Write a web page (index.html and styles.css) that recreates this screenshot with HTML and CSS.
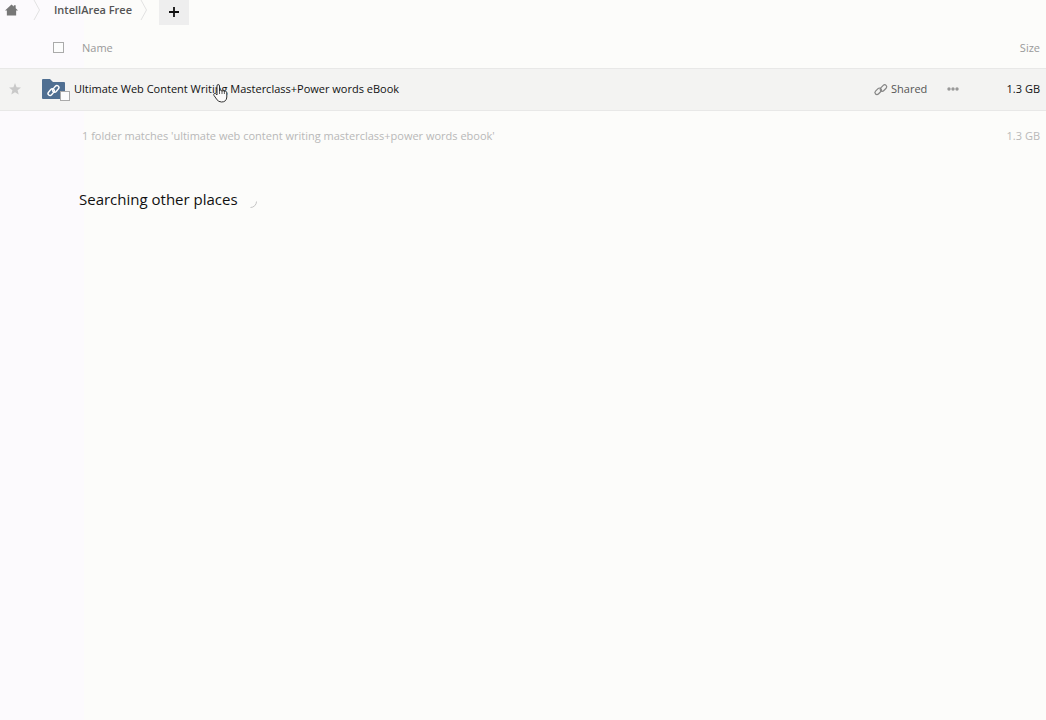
FILE: index.html
```
<!DOCTYPE html>
<html lang="en">
<head>
    <meta charset="UTF-8">
    <meta name="viewport" content="width=device-width, initial-scale=1.0">
    <title>IntellArea Free</title>
    <link rel="stylesheet" href="styles.css">
</head>
<body>
    <nav class="breadcrumb">
        <a class="home" href="#" aria-label="Home">
            <svg width="13" height="12" viewBox="0 0 14 12"><path d="M7 0L9.500 2.300V1H11.500V4.200L14 6.600H12V12H2V6.600H0Z" fill="#777"/></svg>
        </a>
        <svg class="crumb-sep" width="8" height="24" viewBox="0 0 8 24"><path d="M1 0L6.500 10L1 20" fill="none" stroke="#e2e2e2"/></svg>
        <a class="crumb" href="#">IntellArea Free</a>
        <svg class="crumb-sep" width="8" height="24" viewBox="0 0 8 24"><path d="M1 0L6.500 10L1 20" fill="none" stroke="#e2e2e2"/></svg>
        <button class="add-btn" aria-label="New">
            <svg width="10" height="10" viewBox="0 0 10 10"><path d="M5 0V10M0 5H10" stroke="#111" stroke-width="1.800"/></svg>
        </button>
    </nav>

    <table class="files">
        <thead>
            <tr>
                <th class="col-star"></th>
                <th class="col-name">
                    <div class="head-name">
                        <input type="checkbox" id="select-all" class="check" aria-label="Select all">
                        <span>Name</span>
                    </div>
                </th>
                <th class="col-share"></th>
                <th class="col-menu"></th>
                <th class="col-size">Size</th>
            </tr>
        </thead>
        <tbody>
            <tr>
                <td class="col-star">
                    <button class="icon-btn" aria-label="Favorite">
                        <svg width="12" height="12" viewBox="0 0 12 12"><path d="M6 0L7.600 4.200L12 4.500L8.600 7.200L9.700 11.600L6 9.200L2.300 11.600L3.400 7.200L0 4.500L4.400 4.200Z" fill="#c9c9c9"/></svg>
                    </button>
                </td>
                <td class="col-name">
                    <div class="file">
                        <div class="thumb">
                            <svg width="24" height="20" viewBox="0 0 24 20">
                                <path d="M0 1Q0 0 1 0H8L11 3H22Q23 3 23 4V19Q23 20 22 20H1Q0 20 0 19Z" fill="#4f6f92"/>
                                <g fill="none" stroke="#fff" stroke-width="1.400" transform="rotate(-50 11.500 11.500)">
                                    <rect x="5" y="8.800" width="7.500" height="4" rx="2"/>
                                    <rect x="10.500" y="10.200" width="7.500" height="4" rx="2"/>
                                </g>
                            </svg>
                            <input type="checkbox" class="check row-check" aria-label="Select folder">
                        </div>
                        <a class="file-name" href="#">Ultimate Web Content Writing Masterclass+Power words eBook</a>
                        <svg class="pointer" width="15" height="19" viewBox="0 0 15 19"><path d="M4 11V2Q4 .5 5.200 .5T6.500 2V7Q6.500 6 7.700 6T9 7.500Q9 6.500 10.200 6.500T11.400 8Q11.500 7 12.600 7.200T13.800 8.800V13Q13.500 18 8.500 18Q5 18 3.500 15L1 11.500Q.3 10 1.300 9.500T3 10Z" fill="#fafafa" stroke="#333"/><path d="M6.500 7V10M9 7.500V10M11.400 8V10" stroke="#333" stroke-width=".8"/></svg>
                    </div>
                </td>
                <td class="col-share">
                    <button class="share-btn">
                        <svg width="12" height="13" viewBox="0 0 12 13">
                            <g fill="none" stroke="#858585" stroke-width="1.200" transform="rotate(-45 6 6.500)">
                                <rect x="-1" y="3.800" width="7.500" height="4" rx="2"/>
                                <rect x="5" y="5.200" width="7.500" height="4" rx="2"/>
                            </g>
                        </svg>
                        Shared
                    </button>
                </td>
                <td class="col-menu">
                    <button class="icon-btn" aria-label="More">
                        <svg width="12" height="4" viewBox="0 0 12 4" fill="#999"><circle cx="2" cy="2" r="1.700"/><circle cx="6" cy="2" r="1.700"/><circle cx="10" cy="2" r="1.700"/></svg>
                    </button>
                </td>
                <td class="col-size">1.3 GB</td>
            </tr>
        </tbody>
        <tfoot>
            <tr>
                <td class="col-star"></td>
                <td class="summary" colspan="3">1 folder matches 'ultimate web content writing masterclass+power words ebook'</td>
                <td class="col-size">1.3 GB</td>
            </tr>
        </tfoot>
    </table>

    <div class="searching">
        <h2>Searching other places</h2>
        <svg class="spinner" width="14" height="14" viewBox="0 0 14 14"><path d="M12.500 6.500A6 6 0 0 1 6.500 12.500" fill="none" stroke="#c4c4c4"/></svg>
    </div>
</body>
</html>
```
FILE: styles.css
```
* {
    box-sizing: border-box;
}
body {
    margin: 0;
    min-height: 100vh;
    font-family: "Open Sans", sans-serif;
    font-size: 11px;
    line-height: 16px;
    color: #111;
    background: linear-gradient(to right, #fcfafd 84px, #fcfcfa 84px);
}
a {
    color: inherit;
    text-decoration: none;
}
svg {
    display: block;
    flex: none;
    overflow: visible;
}
button {
    display: flex;
    align-items: center;
    padding: 0;
    border: none;
    background: none;
    font: inherit;
    cursor: pointer;
}

/* breadcrumb */
.breadcrumb {
    display: flex;
    align-items: flex-start;
    height: 28px;
    padding-left: 5px;
}
.home {
    padding-top: 4px;
    margin-right: 15px;
}
.crumb {
    padding: 2px 8px 0 13px;
    font-weight: 600;
    color: #555;
}
.add-btn {
    justify-content: center;
    width: 30px;
    height: 25px;
    margin-left: 11px;
    padding-bottom: 2px;
    background: #eee;
}

/* file list */
.files {
    width: 100%;
    border-collapse: collapse;
    table-layout: fixed;
}
th, td {
    padding: 0;
    font-weight: normal;
    text-align: left;
}
thead tr {
    height: 40px;
    color: #999;
}
tbody tr {
    height: 42px;
    background: #f3f3f2;
    border-top: 1px solid #e8e8e7;
    border-bottom: 1px solid #e8e8e7;
}
tfoot tr {
    height: 52px;
    color: #b8b8b8;
}
.col-star {
    width: 42px;
}
.col-star .icon-btn {
    padding-left: 9px;
}
.col-share {
    width: 72px;
}
.col-menu {
    width: 47px;
}
.files .col-size {
    width: 52px;
    padding-right: 6px;
    text-align: right;
}
.head-name {
    display: flex;
    align-items: center;
    gap: 18px;
    padding-left: 11px;
}
.check {
    appearance: none;
    width: 11px;
    height: 11px;
    margin: 0;
    border: 1px solid #aaa;
    background: #fcfcfc;
}
.file {
    display: flex;
    align-items: center;
    position: relative;
}
.thumb {
    position: relative;
    margin-right: 8px;
}
.row-check {
    position: absolute;
    left: 18px;
    top: 12px;
    width: 10px;
    height: 10px;
}
.pointer {
    position: absolute;
    left: 171px;
    top: 5px;
}
.share-btn {
    gap: 4px;
    color: #555;
}
.summary {
    padding-left: 40px;
}

/* search status */
.searching {
    display: flex;
    align-items: center;
    gap: 6px;
    padding: 27px 79px;
}
.searching h2 {
    margin: 0;
    font-size: 15px;
    line-height: 20px;
    font-weight: normal;
}
.spinner {
    margin-top: 6px;
}
```
